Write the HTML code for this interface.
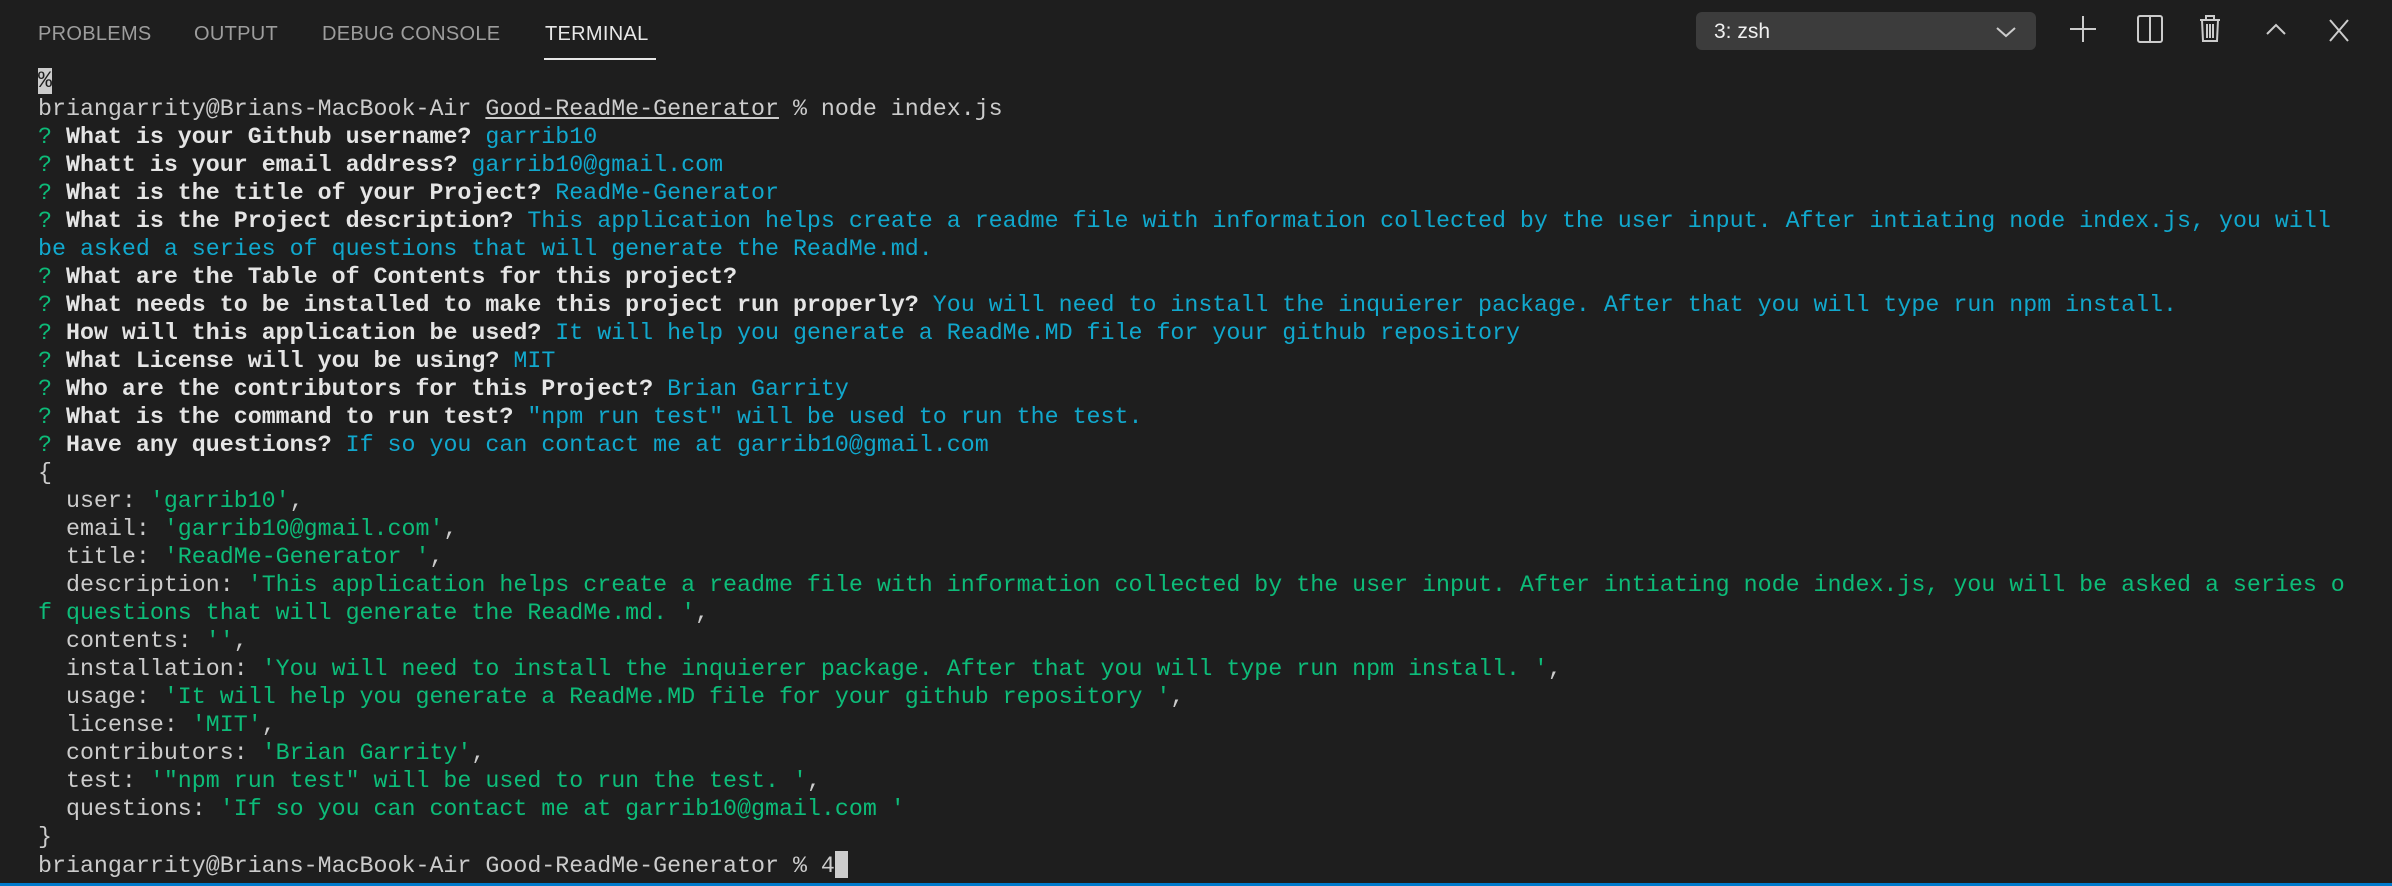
<!DOCTYPE html>
<html><head><meta charset="utf-8"><style>
html,body{margin:0;padding:0;background:#1e1e1e;width:2392px;height:886px;overflow:hidden}
.tabs{position:absolute;top:23px;font-family:"Liberation Sans",sans-serif;font-size:20px;color:#9d9d9d;letter-spacing:0.3px}
.tab{position:absolute;white-space:nowrap}
.act{color:#e7e7e7}
.ul{position:absolute;left:544px;top:58px;width:112px;height:2px;background:#e7e7e7}
.dd{position:absolute;left:1696px;top:12px;width:340px;height:38px;background:#3c3c3c;border-radius:6px;font-family:"Liberation Sans",sans-serif;font-size:21px;color:#f0f0f0}
.dd span{position:absolute;left:18px;top:8px}
.ic{position:absolute;top:14px}
.term{position:absolute;left:38px;top:67px;font-family:"Liberation Mono",monospace;font-size:23.3px;line-height:28px;color:#cccccc;white-space:pre}
b{color:#e5e5e5}
.c{color:#11a8cd}.g{color:#0dbc79}
.u{text-decoration:underline}
.pc{background:#cccccc;color:#1e1e1e}
.cur{display:inline-block;width:13px;height:27px;background:#cccccc;vertical-align:-6px}
.bar{position:absolute;left:0;top:883px;width:2392px;height:3px;background:#007acc}
</style></head><body>
<div class="tabs">
<div class="tab" style="left:38px">PROBLEMS</div>
<div class="tab" style="left:194px">OUTPUT</div>
<div class="tab" style="left:322px">DEBUG CONSOLE</div>
<div class="tab act" style="left:545px">TERMINAL</div>
</div>
<div class="ul"></div>
<div class="dd"><span>3: zsh</span>
<svg style="position:absolute;left:300px;top:14px" width="20" height="12"><path d="M1 2 L10 10 L19 2" stroke="#ccc" stroke-width="2" fill="none"/></svg></div>
<svg class="ic" style="left:2069px" width="28" height="30"><path d="M14 2V28M1 15H27" stroke="#ccc" stroke-width="2"/></svg>
<svg class="ic" style="left:2136px" width="28" height="30"><rect x="2" y="2" width="24" height="26" rx="2" stroke="#ccc" stroke-width="2" fill="none"/><path d="M14 2V28" stroke="#ccc" stroke-width="2"/></svg>
<svg class="ic" style="left:2198px" width="24" height="30"><path d="M2 6H22M8 6V2H16V6M4 6L5 27H19L20 6M9 10V24M12 10V24M15 10V24" stroke="#ccc" stroke-width="2" fill="none"/></svg>
<svg class="ic" style="left:2264px" width="24" height="30"><path d="M3 20L12 11L21 20" stroke="#ccc" stroke-width="2" fill="none"/></svg>
<svg class="ic" style="left:2327px" width="24" height="30"><path d="M3 6L21 27M21 6L3 27" stroke="#ccc" stroke-width="2"/></svg>
<div class="term"><span class="pc">%</span>
briangarrity@Brians-MacBook-Air <span class="u">Good-ReadMe-Generator</span> % node index.js
<span class="g">?</span> <b>What is your Github username?</b> <span class="c">garrib10</span>
<span class="g">?</span> <b>Whatt is your email address?</b> <span class="c">garrib10@gmail.com</span>
<span class="g">?</span> <b>What is the title of your Project?</b> <span class="c">ReadMe-Generator</span>
<span class="g">?</span> <b>What is the Project description?</b> <span class="c">This application helps create a readme file with information collected by the user input. After intiating node index.js, you will
be asked a series of questions that will generate the ReadMe.md.</span>
<span class="g">?</span> <b>What are the Table of Contents for this project?</b>
<span class="g">?</span> <b>What needs to be installed to make this project run properly?</b> <span class="c">You will need to install the inquierer package. After that you will type run npm install.</span>
<span class="g">?</span> <b>How will this application be used?</b> <span class="c">It will help you generate a ReadMe.MD file for your github repository</span>
<span class="g">?</span> <b>What License will you be using?</b> <span class="c">MIT</span>
<span class="g">?</span> <b>Who are the contributors for this Project?</b> <span class="c">Brian Garrity</span>
<span class="g">?</span> <b>What is the command to run test?</b> <span class="c">"npm run test" will be used to run the test.</span>
<span class="g">?</span> <b>Have any questions?</b> <span class="c">If so you can contact me at garrib10@gmail.com</span>
{
  user: <span class="g">'garrib10'</span>,
  email: <span class="g">'garrib10@gmail.com'</span>,
  title: <span class="g">'ReadMe-Generator '</span>,
  description: <span class="g">'This application helps create a readme file with information collected by the user input. After intiating node index.js, you will be asked a series o
f questions that will generate the ReadMe.md. '</span>,
  contents: <span class="g">''</span>,
  installation: <span class="g">'You will need to install the inquierer package. After that you will type run npm install. '</span>,
  usage: <span class="g">'It will help you generate a ReadMe.MD file for your github repository '</span>,
  license: <span class="g">'MIT'</span>,
  contributors: <span class="g">'Brian Garrity'</span>,
  test: <span class="g">'"npm run test" will be used to run the test. '</span>,
  questions: <span class="g">'If so you can contact me at garrib10@gmail.com '</span>
}
briangarrity@Brians-MacBook-Air Good-ReadMe-Generator % 4<span class="cur"></span></div>
<div class="bar"></div>
</body></html>
